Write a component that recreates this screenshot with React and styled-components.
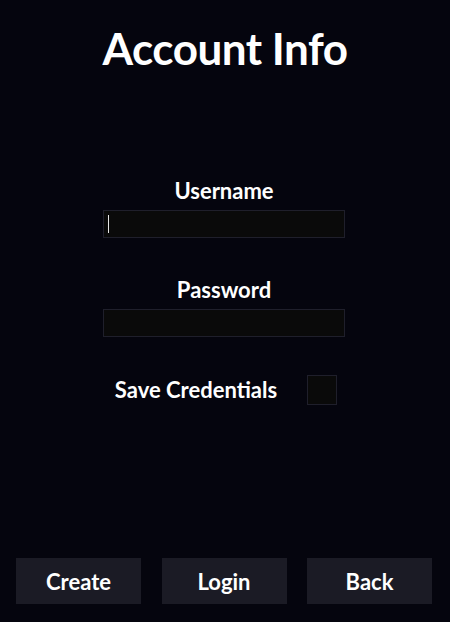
import React, { useState } from 'react';
import styled, { createGlobalStyle } from 'styled-components';

const GlobalStyle = createGlobalStyle`
  html, body {
    margin: 0;
    padding: 0;
    background-color: #05050e;
  }
  * {
    box-sizing: border-box;
  }
`;

const Screen = styled.div`
  width: 450px;
  height: 622px;
  display: flex;
  flex-direction: column;
  align-items: center;
  background-color: #05050e;
  color: #fff;
  font-family: Lato, "Open Sans", sans-serif;
  font-weight: 700;
`;

const Title = styled.h1`
  margin: 20px 0 0;
  font-size: 44px;
  line-height: 56px;
  letter-spacing: -0.5px;
  font-weight: 700;
`;

const Form = styled.form`
  margin: 101px 0 0 -2px;
  width: 242px;
  display: flex;
  flex-direction: column;
  align-items: center;
`;

const Field = styled.div`
  width: 100%;
  display: flex;
  flex-direction: column;
  align-items: center;
  gap: 5px;
  margin-bottom: 38px;
`;

const Label = styled.label`
  font-size: 22px;
  line-height: 28px;
`;

const InputWrap = styled.div`
  position: relative;
  width: 242px;
`;

// text caret drawn over the empty, focused field
const Caret = styled.span`
  position: absolute;
  left: 5px;
  top: 5px;
  width: 1px;
  height: 18px;
  background-color: #e6e6e6;
  pointer-events: none;
`;

const TextInput = styled.input`
  display: block;
  width: 242px;
  height: 28px;
  padding: 0 4px;
  background-color: #0a0a0a;
  border: 1px solid #1f1f2b;
  color: #fff;
  caret-color: #fff;
  font-family: inherit;
  font-size: 16px;
  outline: none;
`;

const CheckRow = styled.label`
  display: flex;
  align-items: center;
  gap: 30px;
  margin: 0 0 0 4px;
  font-size: 22px;
  line-height: 28px;
  cursor: pointer;
`;

const CheckBox = styled.input`
  appearance: none;
  margin: 0;
  width: 30px;
  height: 30px;
  background-color: #0a0a0a;
  border: 1px solid #1f1f2b;
  cursor: pointer;

  &:checked {
    background-color: #2a2a3a;
  }
`;

const Footer = styled.div`
  align-self: flex-start;
  margin: auto 0 18px 16px;
  display: grid;
  grid-template-columns: repeat(3, 125px);
  gap: 20.5px;
`;

const Button = styled.button`
  height: 46px;
  border: none;
  background-color: #1b1b25;
  color: #fff;
  font-family: inherit;
  font-weight: 700;
  font-size: 22px;
  cursor: pointer;
`;

const App = () => {
  const [username, setUsername] = useState('');
  const [password, setPassword] = useState('');
  const [save, setSave] = useState(false);

  return (
    <Screen>
      <GlobalStyle />
      <Title>Account Info</Title>
      <Form onSubmit={(e) => e.preventDefault()}>
        <Field>
          <Label htmlFor="username">Username</Label>
          <InputWrap>
            <TextInput
              id="username"
              type="text"
              autoFocus
              value={username}
              onChange={(e) => setUsername(e.target.value)}
            />
            {username === '' && <Caret />}
          </InputWrap>
        </Field>
        <Field>
          <Label htmlFor="password">Password</Label>
          <InputWrap>
            <TextInput
              id="password"
              type="password"
              value={password}
              onChange={(e) => setPassword(e.target.value)}
            />
          </InputWrap>
        </Field>
        <CheckRow>
          Save Credentials
          <CheckBox
            type="checkbox"
            checked={save}
            onChange={(e) => setSave(e.target.checked)}
          />
        </CheckRow>
      </Form>
      <Footer>
        <Button type="button">Create</Button>
        <Button type="button">Login</Button>
        <Button type="button">Back</Button>
      </Footer>
    </Screen>
  );
};

export default App;
